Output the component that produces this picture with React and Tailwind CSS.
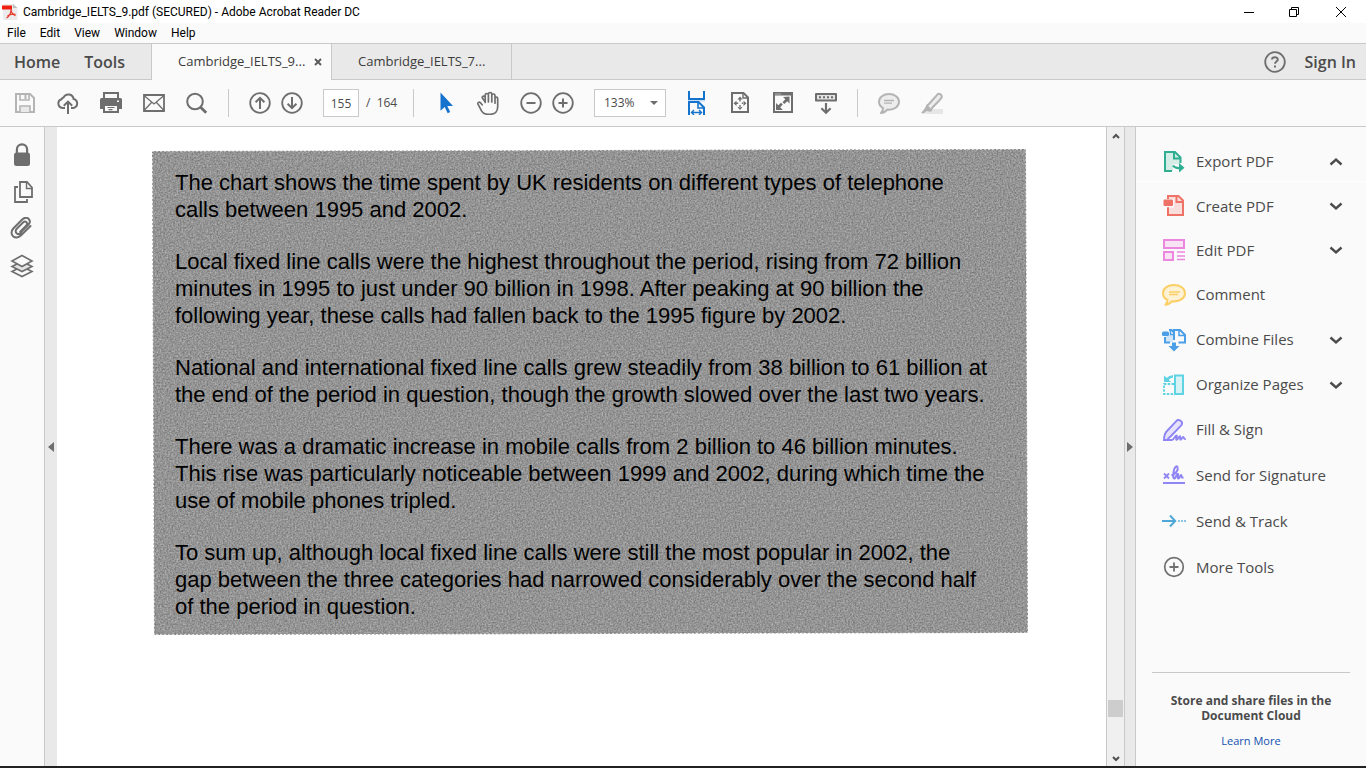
import React from 'react';

const stroke = { fill: 'none', stroke: 'currentColor', strokeWidth: 2 };

function Icon({ children, className = 'w-6 h-6' }) {
  return (
    <svg viewBox="0 0 24 24" className={`${className} shrink-0`} aria-hidden="true">
      {children}
    </svg>
  );
}

const icons = {
  save: (
    <Icon>
      <path {...stroke} d="M3 3h14l4 4v14H3z" />
      <path {...stroke} strokeWidth="1.6" d="M7 3v6h9V3" />
      <path d="M11.5 4h2v4h-2z" fill="currentColor" />
      <path {...stroke} strokeWidth="1.6" fill="#e9e9e9" d="M7 21v-6h10v6" />
    </Icon>
  ),
  cloud: (
    <Icon>
      <path {...stroke} d="M9 17H6.500A4.500 4.500 0 0 1 5.600 8.200 2.600 2.600 0 0 1 7.600 6.400 5.300 5.300 0 0 1 17.600 8 4.600 4.600 0 0 1 17.400 17H15" />
      <path {...stroke} d="M12 23V11M7.800 14.800 12 10.600l4.200 4.200" />
    </Icon>
  ),
  print: (
    <Icon>
      <path {...stroke} d="M5 8V2h14v6" />
      <path fill="currentColor" d="M2.500 7h19A1.500 1.500 0 0 1 23 8.500V18h-4v-4H5v4H1V8.500A1.500 1.500 0 0 1 2.500 7z" />
      <path {...stroke} fill="#fafafa" d="M5 14h14v7H5z" />
      <path {...stroke} strokeWidth="1.2" d="M8.500 16.500h7M9.500 18.700h4" />
      <path d="M18 9.500h2v1.500h-2z" fill="#fafafa" />
    </Icon>
  ),
  mail: (
    <Icon>
      <path {...stroke} strokeWidth="1.8" d="M2 4h20v16H2z" />
      <path {...stroke} strokeWidth="1.3" d="m2 4.500 10 8.500 10-8.500M2 19.500l7.500-8M22 19.500l-7.500-8" />
    </Icon>
  ),
  search: (
    <Icon>
      <circle {...stroke} cx="10" cy="10.500" r="7.800" />
      <path {...stroke} strokeWidth="2.800" d="m15.600 16.200 5.600 5.600" />
    </Icon>
  ),
  up: (
    <Icon>
      <circle {...stroke} strokeWidth="1.8" cx="12" cy="12" r="9.800" />
      <path {...stroke} d="M12 18V7M7.600 11.200 12 6.800l4.400 4.400" />
    </Icon>
  ),
  down: (
    <Icon>
      <circle {...stroke} strokeWidth="1.8" cx="12" cy="12" r="9.800" />
      <path {...stroke} d="M12 6v11M7.600 12.800l4.400 4.400 4.400-4.400" />
    </Icon>
  ),
  cursor: (
    <Icon>
      <path fill="#1473cc" d="M7.500 1.500v18.300l4.200-3.700 3 6.200 2.500-1.300-2.900-6h5.700z" />
    </Icon>
  ),
  hand: (
    <Icon>
      <path
        {...stroke}
        strokeWidth="1.7"
        strokeLinecap="round"
        strokeLinejoin="round"
        d="M6.200 13.800 4.300 11.600c-1-1.200-3 .1-2.300 1.600l3.500 6.600c1.300 2.400 3.200 3.500 6.600 3.500h2.200c4.500 0 7.400-2.800 7.400-7.500V7.500c0-1.900-2.700-1.900-2.700 0v4.700M19 11.500V4.400c0-1.900-3.200-1.900-3.200 0V11M15.800 10V3c0-2-3.400-2-3.400 0v8M12.400 10.500V3.900c0-1.900-3.200-1.900-3.200 0v7.600M9.200 11V6.500c0-1.900-3.200-1.700-3 .2z"
      />
    </Icon>
  ),
  minus: (
    <Icon>
      <circle {...stroke} strokeWidth="1.8" cx="12" cy="12" r="9.800" />
      <path {...stroke} d="M7.500 12h9" />
    </Icon>
  ),
  plus: (
    <Icon>
      <circle {...stroke} strokeWidth="1.8" cx="12" cy="12" r="9.800" />
      <path {...stroke} d="M7.500 12h9M12 7.500v9" />
    </Icon>
  ),
  fitWidth: (
    <Icon>
      <path d="M3 9h17v1.500H3z" fill="#c5dcf3" />
      <g stroke="#1473cc" fill="none" strokeWidth="2">
        <path d="M4 0v8h15V0M4 24V11h9.500L19 16.500V24" />
        <path d="M13 11v6h6" strokeWidth="1.600" />
        <path d="M7 21.500h9M9 19l-2.500 2.500L9 24M14 19l2.500 2.500L14 24" strokeWidth="1.400" />
      </g>
    </Icon>
  ),
  fitPage: (
    <Icon>
      <path {...stroke} d="M4 2h11.500L20 6.500V21H4z" />
      <path {...stroke} strokeWidth="1.400" d="M15 2v5h5" />
      <path fill="currentColor" d="m12 5.500 2.600 3H9.400zM12 19l2.600-3H9.400zM5.500 12.300l3-2.600v5.200zM18.500 12.300l-3-2.600v5.200zM11.300 8h1.400v2.400h-1.400zM11.300 14h1.400v2.400h-1.400zM8 11.600h2.200V13H8zM13.800 11.600H16V13h-2.200z" />
    </Icon>
  ),
  fullscreen: (
    <Icon>
      <path {...stroke} d="M3 2h18v19H3z" />
      <path d="M3 2h18v2.500H3z" fill="currentColor" />
      <path fill="currentColor" d="M18.500 5.500v7l-2.200-2.200-3 2.700-1.800-1.800 2.800-2.900-2.300-2.300zM5 19v-7l2.300 2.300 2.700-2.600 1.800 1.800-2.600 2.700L11.800 19z" />
      <path d="M4.500 2.500h1v1h-1zM6.500 2.500h1v1h-1zM8.500 2.500h1v1h-1z" fill="#fafafa" />
    </Icon>
  ),
  readMode: (
    <Icon>
      <path {...stroke} fill="#e3e3e3" strokeLinejoin="round" d="M2 3h20v6.500H2z" />
      <path {...stroke} strokeDasharray="2 2" d="M5 6.200h14" />
      <path {...stroke} strokeWidth="2.200" d="M12 12v9.500M7.400 17.200l4.600 4.600 4.600-4.600" />
    </Icon>
  ),
  bubble: (
    <Icon>
      <path {...stroke} fill="#ededed" strokeLinejoin="round" d="M12 3C6.400 3 2 6.300 2 10.800c0 2.800 1.700 5 4.100 6.300 0 2-.7 3.700-2.100 5 2.500-.2 4.700-1.500 6.300-3.500l1.700.1c5.600 0 10-3.400 10-7.900S17.600 3 12 3z" />
      <path {...stroke} strokeWidth="1.300" d="M7 9.500h10M7 12.200h8" />
    </Icon>
  ),
  marker: (
    <Icon>
      <path d="M9 18h14v5H5z" fill="#e6e6e6" />
      <path {...stroke} strokeLinejoin="round" fill="#ededed" d="m7 14.500 2-1.500L17.600 3.300c1.400-1.500 5 .4 4 3.300-.3 1-7.100 7.700-9.600 10.400l-1.300 2.400z" />
      <path fill="currentColor" d="m6.500 14 5 5-1.300 1.800-3.300-.8L4 22.500 1 22l3.500-4.300z" />
    </Icon>
  ),
  lock: (
    <Icon>
      <path {...stroke} strokeWidth="2.200" d="M6.900 11V6.500a5.100 5.100 0 0 1 10.200 0V11" />
      <rect x="4" y="9.500" width="16" height="13.500" rx="2.500" fill="currentColor" />
    </Icon>
  ),
  pages: (
    <Icon>
      <path {...stroke} strokeWidth="1.800" d="M8 7H5v15h12v-3" />
      <path {...stroke} strokeWidth="1.800" fill="#fafafa" d="M10 2h7l5 5.500V17H10z" />
      <path {...stroke} strokeWidth="1.400" d="M16.500 2v6.500H22" />
    </Icon>
  ),
  clip: (
    <Icon>
      <path
        {...stroke}
        strokeLinecap="round"
        d="m10.200 14.800 6-6c2.600-2.600-.8-5.600-3.200-3.300l-6 6c-3.600 3.600 1 7.500 4.200 4.300M20.500 9l-9.400 9.300c-5.800 5.600-13-1-7.800-6.800l8.900-9c5-4.500 9.800.8 6.300 5l-7.700 7.700"
      />
    </Icon>
  ),
  layers: (
    <Icon>
      <path {...stroke} strokeWidth="1.600" fill="#fafafa" d="m12 12.500 10 5-10 5-10-5z" />
      <path {...stroke} strokeWidth="1.600" fill="#e3e3e3" d="m12 7.500 10 5-10 5-10-5z" />
      <path {...stroke} strokeWidth="1.600" fill="#fafafa" d="m12 1.500 10 5.500-10 5.500L2 7z" />
    </Icon>
  ),
  exportPdf: (
    <Icon>
      <path d="M3 2h10l5.500 5.500V14H11v7H3z" fill="#d5ede6" />
      <path d="M10 21H3V2h10l5.500 5.500V13M12 2v6.500h6" fill="none" stroke="#2fae92" strokeWidth="2" />
      <path d="M11 15.500c1.500 2.500 4 2.700 7 2.500" fill="none" stroke="#2fae92" strokeWidth="2.200" />
      <path d="m17 13 5.500 4.800L17 22.500z" fill="#2fae92" />
    </Icon>
  ),
  createPdf: (
    <Icon>
      <path d="M6 2h10.500L21 6.500V21H6z" fill="#f9dedb" stroke="#ef7267" strokeWidth="2" />
      <path d="M14.500 2v6H21" fill="none" stroke="#ef7267" strokeWidth="2" />
      <path d="M1 5h11v8.500H1z" fill="#fafafa" />
      <rect x="1.500" y="5.500" width="9.500" height="6.500" rx="1.200" fill="#ef7267" />
      <path d="M6 13.500V21" stroke="#ef7267" strokeWidth="2" />
    </Icon>
  ),
  editPdf: (
    <Icon>
      <path d="M2 2h20v8H2zM2 14h9v8H2z" fill="#f8e3f5" stroke="#ec87df" strokeWidth="2" />
      <path d="M15 14h8M15 18h8M15 21.500h8" stroke="#ec87df" strokeWidth="1.300" />
    </Icon>
  ),
  comment: (
    <Icon>
      <path fill="#fdf1d6" stroke="#fbcf63" strokeWidth="2" strokeLinejoin="round" d="M12 2C6.200 2 1 5 1 10.200c0 3 1.900 5.400 4.500 6.700 0 1.900-.7 3.600-2.100 4.800 2.600-.2 4.800-1.500 6.400-3.400l2.200.1c6 0 11-3.400 11-8.200S18 2 12 2z" />
      <path d="M7 9h11M7 11.500h9" stroke="#fbcf63" strokeWidth="1.300" />
    </Icon>
  ),
  combine: (
    <Icon>
      <path d="M4 7h7v7H3z" fill="#d2e6f8" />
      <g fill="none" stroke="#4a9fe8" strokeWidth="2">
        <path d="M7 2h2.500L12 4.500M3 9v5.500h5M12 12V2h6l5 5v7.500h-6.500" />
        <path d="M17 2v5.500h6M8.500 2v4.500H12" strokeWidth="1.500" />
      </g>
      <rect x="0" y="3.500" width="7" height="4.500" rx="1.500" fill="#4a9fe8" />
      <path d="M10 14.500h4v3.500h3.500L12 23.500 6.500 18H10z" fill="#4a9fe8" />
    </Icon>
  ),
  organize: (
    <Icon>
      <path d="M13 2.500h8V21h-8z" fill="#d8f3f6" stroke="#5fd3e3" strokeWidth="2" />
      <path d="M12 11H2v10h10" fill="none" stroke="#5fd3e3" strokeWidth="1.800" strokeDasharray="2.500 1.300" />
      <path d="M2 2.500v6.500h7L6.700 6.700C8 5.500 9.300 4.800 11 4.700V2.200C8.500 2.300 6.600 3.200 4.900 5z" fill="#5fd3e3" />
    </Icon>
  ),
  fillSign: (
    <Icon>
      <path d="M2 22c0-4 1-7 3-9L14.500 2.800c2.300-2 6.800.7 5.200 4.100L8.500 18.500 5.500 21" fill="#e6e2fc" stroke="#8f85f4" strokeWidth="1.900" strokeLinejoin="round" />
      <path d="M1 22h9c1.500 0 3.500-4.500 4.500-4.500 1.300 0-1.300 4.400.3 4.400 1.400 0 2-3.800 3.200-3.700 1 0-.5 3.500.7 3.500 1.200 0 1.600-3 2.600-2.800.8.200-.2 2.300 2.500 2.300" fill="none" stroke="#8f85f4" strokeWidth="1.900" />
    </Icon>
  ),
  signature: (
    <Icon>
      <path d="M1 20h22" stroke="#8f85f4" strokeWidth="2" />
      <path d="m2 10.500 5 5M7 10.500l-5 5" stroke="#8f85f4" strokeWidth="1.800" />
      <path d="M9.500 12.500C14 10.500 16.500 7 15.600 4.200c-.5-1.700-2.700-.7-3.500 2.400-.9 3.700-1.500 8.900.3 8.900s1.600-4.800 3.200-4.800c1.500 0-.9 4.800.8 4.800s1.500-3.500 2.600-3.500c1.200 0-.4 3.500 2.500 2.400" fill="none" stroke="#8f85f4" strokeWidth="2" />
    </Icon>
  ),
  track: (
    <Icon>
      <path d="M0 12h13M8 6.500l5.200 5.500L8 17.500" fill="none" stroke="#4fa8d8" strokeWidth="2" />
      <path d="M16 12h2M19 12h2M22 12h2" stroke="#8cc6e6" strokeWidth="1.800" />
    </Icon>
  ),
  more: (
    <Icon>
      <circle cx="12" cy="12" r="9.300" fill="none" stroke="#707070" strokeWidth="1.700" />
      <path d="M7.500 12h9M12 7.500v9" stroke="#707070" strokeWidth="1.800" />
    </Icon>
  ),
};

function ToolButton({ label, icon, className = '' }) {
  return (
    <button type="button" aria-label={label} className={`shrink-0 ${className}`}>
      {icons[icon]}
    </button>
  );
}

function Separator() {
  return <div className="h-7 w-px shrink-0 bg-[#c9c9c9]" />;
}

function TitleBar() {
  return (
    <header className="flex h-[23px] shrink-0 items-center bg-white pl-0.5 text-black">
      <svg viewBox="0 0 16 16" className="h-4 w-4 shrink-0" aria-hidden="true">
        <path d="M1 0h10l4.500 4v12H1z" fill="#ececec" />
        <path d="M11 0v4h4.500z" fill="#bdbdbd" />
        <path d="M0 1.500h10v4H0z" fill="#f01f10" />
        <path d="M9 4.500c.3 4-1.500 7.500-4.500 9.500M9 4.800c0 3 2 6 4.500 7M5.500 11.800c2.500-1.500 5.500-2 8-1.500" fill="none" stroke="#e8392c" strokeWidth="1.200" />
      </svg>
      <h1 className="ml-[5px] flex-1 whitespace-nowrap font-[Roboto,sans-serif] text-[12px] leading-4">
        Cambridge_IELTS_9.pdf (SECURED) - Adobe Acrobat Reader DC
      </h1>
      <button type="button" aria-label="Minimize" className="flex w-[45px] justify-center">
        <svg viewBox="0 0 10 10" className="h-2.5 w-2.5"><path d="M0 5h10v1H0z" /></svg>
      </button>
      <button type="button" aria-label="Restore" className="flex w-[45px] justify-center">
        <svg viewBox="0 0 10 10" className="h-2.5 w-2.5" fill="none" stroke="#000">
          <path d="M.5 2.500h7v7h-7zM2.500 2V.5h7v7H8" />
        </svg>
      </button>
      <button type="button" aria-label="Close" className="flex w-[50px] justify-center">
        <svg viewBox="0 0 10 10" className="h-2.5 w-2.5" fill="none" stroke="#000"><path d="m0 0 10 10M10 0 0 10" /></svg>
      </button>
    </header>
  );
}

function MenuBar() {
  return (
    <nav className="flex h-5 shrink-0 items-center gap-3.5 bg-[#fafafa] pl-[7px] font-[Roboto,sans-serif] text-[12px] leading-4 text-black">
      {['File', 'Edit', 'View', 'Window', 'Help'].map((item) => (
        <button type="button" key={item}>{item}</button>
      ))}
    </nav>
  );
}

function TabBar() {
  return (
    <div className="flex h-[37px] shrink-0 border-t border-[#c9c9c9] bg-[#e9e9e9] text-[#4b4b4b]">
      <div className="flex w-[151px] items-center gap-6 border-b border-[#c9c9c9] pl-3.5 text-[16px] font-semibold">
        <button type="button">Home</button>
        <button type="button">Tools</button>
      </div>
      <div className="flex w-[181px] items-center border-x border-[#c9c9c9] bg-[#fafafa] pl-[26px] text-[13px]">
        <button type="button" className="w-32 text-left text-[#3b3b3b]">Cambridge_IELTS_9...</button>
        <button type="button" aria-label="Close tab" className="ml-2">
          <svg viewBox="0 0 8 8" className="h-2 w-2"><path d="m1 1 6 6M7 1 1 7" stroke="#5a5a5a" strokeWidth="1.900" /></svg>
        </button>
      </div>
      <div className="flex w-[180px] items-center border-b border-r border-[#c9c9c9] pl-[26px] text-[13px]">
        <button type="button" className="text-[#3b3b3b]">Cambridge_IELTS_7...</button>
      </div>
      <div className="flex flex-1 items-center justify-end gap-[18px] border-b border-[#c9c9c9] pr-2.5">
        <button type="button" aria-label="Help" className="text-[#6e6e6e]">
          <Icon>
            <circle {...stroke} strokeWidth="1.800" cx="12" cy="12" r="9.800" />
            <path {...stroke} strokeWidth="1.900" d="M9 9.500c0-3 5.800-3 5.800 0 0 2-2.800 2-2.800 4.300" />
            <path fill="currentColor" d="M11 15.500h2v2h-2z" />
          </Icon>
        </button>
        <button type="button" className="text-[16px] font-semibold">Sign In</button>
      </div>
    </div>
  );
}

function Toolbar() {
  return (
    <div className="flex h-[47px] shrink-0 items-center gap-[19px] border-b border-[#c9c9c9] bg-[#fafafa] pl-[13px] text-[12px] text-[#6e6e6e]">
      <ToolButton label="Save" icon="save" className="text-[#b4b4b4]" />
      <ToolButton label="Upload to cloud" icon="cloud" />
      <ToolButton label="Print" icon="print" />
      <ToolButton label="Email" icon="mail" />
      <ToolButton label="Find" icon="search" />
      <Separator />
      <div className="flex gap-2">
        <ToolButton label="Previous page" icon="up" />
        <ToolButton label="Next page" icon="down" />
      </div>
      <div className="flex items-center gap-[7px] text-[#4b4b4b]">
        <input aria-label="Page number" defaultValue="155" className="h-7 w-9 border border-[#c9c9c9] bg-white text-center" />
        <span className="w-7 whitespace-pre">/  164</span>
      </div>
      <Separator />
      <ToolButton label="Select tool" icon="cursor" />
      <ToolButton label="Hand tool" icon="hand" />
      <div className="flex gap-2">
        <ToolButton label="Zoom out" icon="minus" />
        <ToolButton label="Zoom in" icon="plus" />
      </div>
      <div className="relative">
        <select aria-label="Zoom level" className="block h-7 w-[72px] appearance-none border border-[#c9c9c9] bg-white pl-[9px] text-[#4b4b4b]">
          <option>133%</option>
        </select>
        <svg viewBox="0 0 8 4" className="pointer-events-none absolute right-2 top-3 h-1 w-2"><path d="M0 0h8L4 4z" fill="#6e6e6e" /></svg>
      </div>
      <ToolButton label="Fit width" icon="fitWidth" />
      <ToolButton label="Fit page" icon="fitPage" />
      <ToolButton label="Full screen" icon="fullscreen" />
      <ToolButton label="Read mode" icon="readMode" />
      <Separator />
      <ToolButton label="Add comment" icon="bubble" className="text-[#b4b4b4]" />
      <ToolButton label="Highlight" icon="marker" className="text-[#b4b4b4]" />
    </div>
  );
}

const paragraphs = [
  [
    'The chart shows the time spent by UK residents on different types of telephone',
    'calls between 1995 and 2002.',
  ],
  [
    'Local fixed line calls were the highest throughout the period, rising from 72 billion',
    'minutes in 1995 to just under 90 billion in 1998. After peaking at 90 billion the',
    'following year, these calls had fallen back to the 1995 figure by 2002.',
  ],
  [
    'National and international fixed line calls grew steadily from 38 billion to 61 billion at',
    'the end of the period in question, though the growth slowed over the last two years.',
  ],
  [
    'There was a dramatic increase in mobile calls from 2 billion to 46 billion minutes.',
    'This rise was particularly noticeable between 1999 and 2002, during which time the',
    'use of mobile phones tripled.',
  ],
  [
    'To sum up, although local fixed line calls were still the most popular in 2002, the',
    'gap between the three categories had narrowed considerably over the second half',
    'of the period in question.',
  ],
];

function Page() {
  return (
    <main className="min-w-0 flex-1 overflow-hidden bg-white pl-[95px] pt-[22px]">
      <article className="relative w-full max-w-[876px] pb-[15px] pl-[23px] pt-5">
        <svg viewBox="0 0 876 486" preserveAspectRatio="none" className="absolute inset-0 h-full w-full" aria-hidden="true">
          <defs>
            <filter id="grain" x="0" y="0" width="100%" height="100%" colorInterpolationFilters="sRGB">
              <feTurbulence type="fractalNoise" baseFrequency="0.6" numOctaves="2" seed="4" />
              <feColorMatrix values="0.36 0 0 0 0.4  0.36 0 0 0 0.4  0.36 0 0 0 0.4  0 0 0 0 1" />
              <feComposite in2="SourceGraphic" operator="in" />
            </filter>
          </defs>
          <path d="M0 2 874 0l2 484-874 2z" fill="#909090" filter="url(#grain)" />
          <path d="M0 2 874 0l2 484-874 2z" fill="none" stroke="#fff" strokeDasharray="2 2" />
        </svg>
        <div className="relative flex flex-col gap-[25px] font-['Liberation_Sans',Arial,sans-serif] text-[22px] leading-[27px] text-black">
          {paragraphs.map((lines) => (
            <p key={lines[0]}>
              {lines.map((line) => (
                <span key={line} className="block whitespace-nowrap">{line}</span>
              ))}
            </p>
          ))}
        </div>
      </article>
    </main>
  );
}

function ScrollBar() {
  return (
    <div className="flex w-[19px] shrink-0 flex-col items-center border-x border-[#c9c9c9] bg-[#f0f0f0]" role="presentation">
      <button type="button" aria-label="Scroll up" className="flex h-[18px] w-full items-center justify-center">
        <svg viewBox="0 0 8 6" className="h-1.5 w-2"><path d="m1 5 3-3 3 3" fill="none" stroke="#505050" strokeWidth="2" /></svg>
      </button>
      <div className="flex-1" />
      <div className="h-[17px] w-[15px] bg-[#cdcdcd]" />
      <div className="h-[35px]" />
      <button type="button" aria-label="Scroll down" className="flex h-3.5 w-full items-center justify-center">
        <svg viewBox="0 0 8 6" className="h-1.5 w-2"><path d="m1 1 3 3 3-3" fill="none" stroke="#505050" strokeWidth="2" /></svg>
      </button>
    </div>
  );
}

const tools = [
  { label: 'Export PDF', icon: 'exportPdf', size: 'h-10 border-b border-white mb-0.5', chevron: 'up' },
  { label: 'Create PDF', icon: 'createPdf', size: 'h-11', chevron: 'down' },
  { label: 'Edit PDF', icon: 'editPdf', size: 'h-11', chevron: 'down' },
  { label: 'Comment', icon: 'comment', size: 'h-[45px]' },
  { label: 'Combine Files', icon: 'combine', size: 'h-[45px]', chevron: 'down' },
  { label: 'Organize Pages', icon: 'organize', size: 'h-[45px]', chevron: 'down' },
  { label: 'Fill & Sign', icon: 'fillSign', size: 'h-[45px]' },
  { label: 'Send for Signature', icon: 'signature', size: 'h-[46px]' },
  { label: 'Send & Track', icon: 'track', size: 'h-[46px]' },
  { label: 'More Tools', icon: 'more', size: 'h-[46px]' },
];

function ToolsPane() {
  return (
    <aside className="flex w-[230px] shrink-0 flex-col bg-[#fafafa] pt-[15px]">
      {tools.map((tool) => (
        <button type="button" key={tool.label} className={`flex items-center gap-2.5 pl-[26px] pr-[22px] text-left text-[15px] text-[#4b4b4b] ${tool.size}`}>
          {icons[tool.icon]}
          <span className="flex-1 whitespace-nowrap">{tool.label}</span>
          {tool.chevron && (
            <svg viewBox="0 0 16 16" className="h-4 w-4 shrink-0" fill="none" stroke="#4b4b4b" strokeWidth="2.400">
              <path d={tool.chevron === 'up' ? 'm2.500 10.500 5.500-5 5.500 5' : 'm2.500 5.500 5.500 5 5.500-5'} />
            </svg>
          )}
        </button>
      ))}
      <div className="mx-4 mt-auto flex flex-col items-center border-t border-[#c9c9c9] pb-[17px] pt-5 text-center">
        <p className="text-[12px] font-bold leading-[15px] text-[#4b4b4b]">
          Store and share files in the<br />Document Cloud
        </p>
        <a href="#learn-more" className="mt-2.5 text-[11px] leading-4 text-[#1151b0]">Learn More</a>
      </div>
    </aside>
  );
}

export default function App() {
  return (
    <div className="flex h-screen flex-col overflow-hidden bg-[#fafafa] font-['Open_Sans','Noto_Sans',sans-serif]">
      <TitleBar />
      <MenuBar />
      <TabBar />
      <Toolbar />
      <div className="flex min-h-0 flex-1 border-b-2 border-[#222]">
        <div className="flex w-[45px] shrink-0 flex-col items-center gap-[13px] border-r border-[#c9c9c9] pt-4 text-[#6e6e6e]">
          <ToolButton label="Security settings" icon="lock" />
          <ToolButton label="Page thumbnails" icon="pages" />
          <ToolButton label="Attachments" icon="clip" />
          <ToolButton label="Layers" icon="layers" />
        </div>
        <button type="button" aria-label="Show navigation pane" className="flex w-3 shrink-0 items-center justify-center bg-[#e9e9e9]">
          <svg viewBox="0 0 6 10" className="h-2.5 w-1.5"><path d="M6 0v10L0 5z" fill="#6e6e6e" /></svg>
        </button>
        <Page />
        <ScrollBar />
        <button type="button" aria-label="Hide tools pane" className="flex w-[11px] shrink-0 items-center justify-center border-r border-[#c9c9c9] bg-[#e9e9e9]">
          <svg viewBox="0 0 6 10" className="h-2.5 w-1.5"><path d="M0 0v10l6-5z" fill="#6e6e6e" /></svg>
        </button>
        <ToolsPane />
      </div>
    </div>
  );
}
